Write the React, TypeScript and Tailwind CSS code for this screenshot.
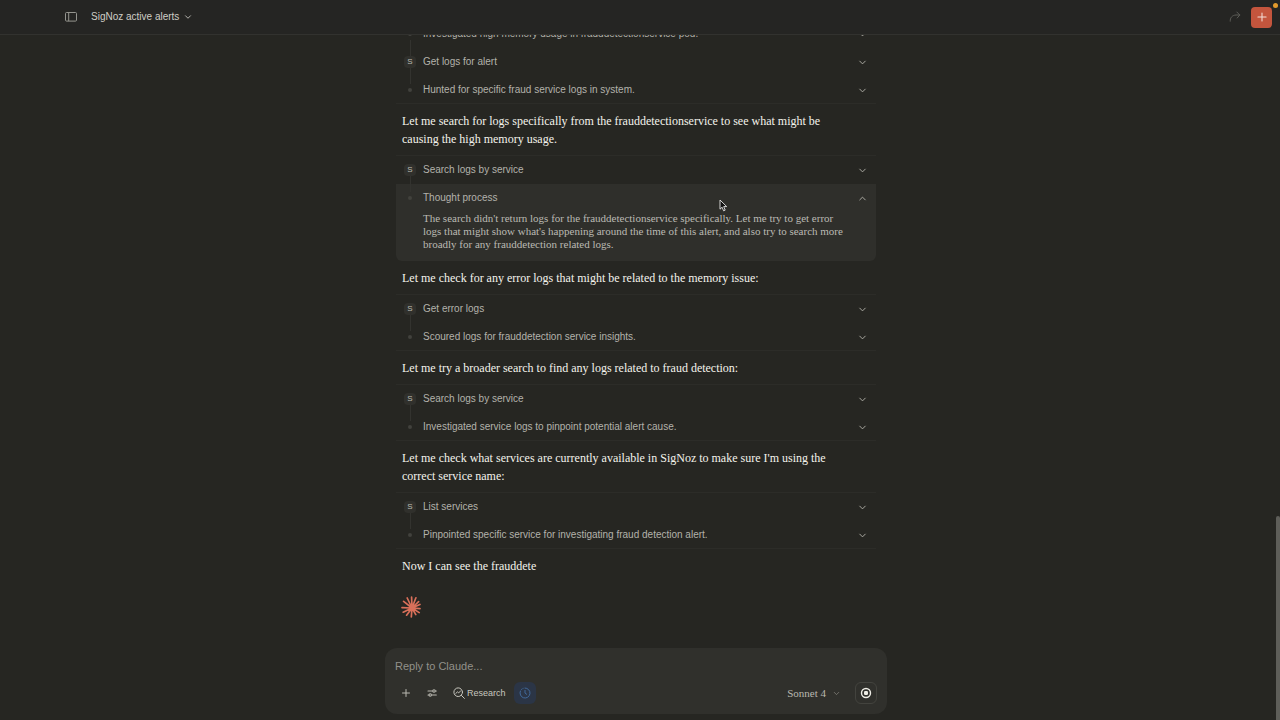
import { ReactNode } from "react";
import { ChevronDown, ChevronUp, Plus } from "lucide-react";

type StepData = { label: string; tool?: boolean; body?: string };

function Marker({ tool, first, last }: { tool?: boolean; first: boolean; last: boolean }) {
  return (
    <span className="flex w-3 shrink-0 flex-col items-center self-stretch">
      <span className={`h-2 w-px ${first ? "" : "bg-[#33332f]"}`} />
      {tool ? (
        <span className="flex h-3 w-3 items-center justify-center rounded-sm bg-[#30302c] text-[8px] leading-3 font-medium text-[#bdbcb5]">
          S
        </span>
      ) : (
        <span className="my-1 h-1 w-1 rounded-full bg-[#42423d]" />
      )}
      <span className={`w-px flex-1 ${last ? "" : "bg-[#33332f]"}`} />
    </span>
  );
}

function Step({ step, first, last }: { step: StepData; first: boolean; last: boolean }) {
  const open = Boolean(step.body);
  return (
    <div className={open ? "rounded-b-md bg-[#2f2f2b] pb-2.5" : ""}>
      <button
        type="button"
        aria-expanded={open}
        className="flex h-7 w-full items-center gap-[7px] pr-2 pl-2 text-left text-[10px] leading-4 text-[#b3b2ab]"
      >
        <Marker tool={step.tool} first={first} last={last} />
        <span className="flex-1">{step.label}</span>
        {open ? (
          <ChevronUp className="size-[11px]" strokeWidth={2} />
        ) : (
          <ChevronDown className="size-[11px]" strokeWidth={2} />
        )}
      </button>
      {step.body && (
        <p className='max-w-[455px] pr-1 pl-[27px] font-["Liberation_Serif",serif] text-[11px] leading-[13px] text-[#bbbab3]'>
          {step.body}
        </p>
      )}
    </div>
  );
}

function Steps({ items }: { items: StepData[] }) {
  const open = items.some((item) => item.body);
  return (
    <section className={`border-t border-[#2c2c28] ${open ? "" : "border-b"}`}>
      <div className={open ? "" : "-mb-px"}>
        {items.map((item, i) => (
          <Step key={item.label} step={item} first={i === 0} last={i === items.length - 1} />
        ))}
      </div>
    </section>
  );
}

function Message({ children }: { children: ReactNode }) {
  return (
    <p className='mt-2 mb-[7px] max-w-[446px] pl-1.5 font-["Liberation_Serif",serif] text-xs leading-[18px] text-[#f4f3ec]'>
      {children}
    </p>
  );
}

function Burst() {
  return (
    <svg viewBox="0 0 20 22" className="ml-[5px] h-[22px] w-5" fill="none" stroke="#d9705a" strokeWidth="1.7" strokeLinecap="round" aria-hidden="true">
      <path d="M11 12 10.6 1.2M11 12 6.2 2M11 12 14.9 1.8M11 12 2.6 5.4M11 12 17.6 5.6M11 12 1 11.6M11 12 18.9 8.4M11 12 19 12.6M11 12 2.2 16.2M11 12 18.2 16.6M11 12 5.6 19.2M11 12 14.8 18.6M11 12 10.3 21" />
      <circle cx="11" cy="12" r="2.8" fill="#d9705a" stroke="none" />
    </svg>
  );
}

function SidebarIcon() {
  return (
    <svg viewBox="0 0 12 10" className="h-2.5 w-3" fill="none" stroke="currentColor" strokeWidth="1" aria-hidden="true">
      <rect x=".5" y=".5" width="11" height="8.6" rx="1" />
      <path d="M3.7.5v8.6" />
    </svg>
  );
}

function SlidersIcon() {
  return (
    <svg viewBox="0 0 12 12" className="size-3" fill="none" stroke="currentColor" strokeWidth="1.1" strokeLinecap="round" aria-hidden="true">
      <path d="M2 4h4.5M9.5 4h.8M2 8h.8M5.7 8h4.6" />
      <circle cx="8" cy="4" r="1.2" />
      <circle cx="4.2" cy="8" r="1.2" />
    </svg>
  );
}

function ResearchIcon() {
  return (
    <svg viewBox="0 0 12 12" className="size-3" fill="none" stroke="currentColor" strokeWidth="1" strokeLinecap="round" strokeLinejoin="round" aria-hidden="true">
      <circle cx="5.2" cy="5.2" r="4.3" />
      <path d="m8.4 8.4 3 3M2.8 6.4l1.7-1.5 1.2 1 2-2.1" />
    </svg>
  );
}

function ClockIcon() {
  return (
    <svg viewBox="0 0 12 12" className="size-3" fill="none" stroke="currentColor" strokeWidth="1" strokeLinecap="round" aria-hidden="true">
      <path d="M6 1a5 5 0 1 1-4.6 3" />
      <path d="M2.3 2.6A5 5 0 0 1 4.2 1.4" strokeDasharray="1 1.2" />
      <path d="M6 3.4V6l1.7 1.3" />
    </svg>
  );
}

function ShareIcon() {
  return (
    <svg viewBox="0 0 12 12" className="size-3" fill="none" stroke="currentColor" strokeWidth="1" strokeLinecap="round" strokeLinejoin="round" aria-hidden="true">
      <path d="M1.2 10.2C1 6.6 3.3 4.2 7 4h3.8M7.8 1l3 3-2.6 3" />
    </svg>
  );
}

function Pointer() {
  return (
    <svg viewBox="0 0 9 13" className="pointer-events-none absolute top-[180px] left-[323px] h-[13px] w-[9px]" aria-hidden="true">
      <path d="M1 1v9.2l2.1-2 1.5 3.6 1.6-.7-1.5-3.5h3Z" fill="#111" stroke="#e6e6e6" strokeWidth=".9" />
    </svg>
  );
}

export default function App() {
  return (
    <div className='relative flex h-screen flex-col overflow-hidden bg-[#262622] font-["Liberation_Sans",sans-serif] text-[#c3c2ba]'>
      <header className="flex h-[35px] shrink-0 items-center border-b border-[#32322f] bg-[#252523] pr-2 pl-16">
        <button type="button" aria-label="Toggle sidebar" className="flex w-[13px] items-center justify-center text-[#94948e]">
          <SidebarIcon />
        </button>
        <button type="button" className="ml-3.5 flex items-center gap-1 text-[10px] leading-4 text-[#cfcec6]">
          SigNoz active alerts
          <ChevronDown className="size-[10px]" strokeWidth={2} />
        </button>
        <button type="button" aria-label="Share" className="ml-auto text-[#5c5c57]">
          <ShareIcon />
        </button>
        <button type="button" aria-label="New chat" className="relative ml-2.5 flex size-[21px] items-center justify-center rounded bg-[#c4553d] text-[#f3dfd7]">
          <Plus className="size-3.5" strokeWidth={1.8} />
          <span className="absolute -top-1 -right-1.5 size-[5px] rounded-full bg-[#e39a2d]" />
        </button>
      </header>

      <main className="min-h-0 flex-1 overflow-hidden">
        <div className="relative mx-auto -mt-4 w-full max-w-[480px] -translate-x-1">
          <Steps
            items={[
              { label: "Investigated high memory usage in frauddetectionservice pod." },
              { label: "Get logs for alert", tool: true },
              { label: "Hunted for specific fraud service logs in system." },
            ]}
          />
          <Message>
            Let me search for logs specifically from the frauddetectionservice to see what might be causing the
            high memory usage.
          </Message>
          <Steps
            items={[
              { label: "Search logs by service", tool: true },
              {
                label: "Thought process",
                body: "The search didn't return logs for the frauddetectionservice specifically. Let me try to get error logs that might show what's happening around the time of this alert, and also try to search more broadly for any frauddetection related logs.",
              },
            ]}
          />
          <Message>Let me check for any error logs that might be related to the memory issue:</Message>
          <Steps
            items={[
              { label: "Get error logs", tool: true },
              { label: "Scoured logs for frauddetection service insights." },
            ]}
          />
          <Message>Let me try a broader search to find any logs related to fraud detection:</Message>
          <Steps
            items={[
              { label: "Search logs by service", tool: true },
              { label: "Investigated service logs to pinpoint potential alert cause." },
            ]}
          />
          <Message>
            Let me check what services are currently available in SigNoz to make sure I'm using the correct
            service name:
          </Message>
          <Steps
            items={[
              { label: "List services", tool: true },
              { label: "Pinpointed specific service for investigating fraud detection alert." },
            ]}
          />
          <Message>Now I can see the frauddete</Message>
          <div className="pt-3.5">
            <Burst />
          </div>
          <Pointer />
        </div>
      </main>

      <form className="mx-auto mb-1.5 flex w-full max-w-[502px] shrink-0 -translate-x-1 flex-col gap-2 rounded-xl bg-[#30302c] px-2.5 pt-2.5 pb-2.5">
        <input
          type="text"
          aria-label="Message"
          placeholder="Reply to Claude..."
          className="h-4 w-full bg-transparent text-[11px] leading-4 outline-none placeholder:text-[#92918a]"
        />
        <div className="flex h-[22px] items-center text-[#b9b8b0]">
          <button type="button" aria-label="Add" className="flex size-[22px] items-center justify-center rounded-md">
            <Plus className="size-3" strokeWidth={2} />
          </button>
          <button type="button" aria-label="Tools" className="ml-1 flex size-[22px] items-center justify-center rounded-md">
            <SlidersIcon />
          </button>
          <button type="button" className="ml-2.5 flex h-[22px] items-center gap-0.5 text-[9px] leading-4 text-[#c8c7bf]">
            <ResearchIcon />
            Research
          </button>
          <button type="button" aria-label="Extended thinking" className="ml-2 flex size-[22px] items-center justify-center rounded-md bg-[#2b3546] text-[#41699a]">
            <ClockIcon />
          </button>
          <button type="button" className='ml-auto flex items-center gap-1.5 font-["Liberation_Serif",serif] text-[11px] leading-4'>
            Sonnet 4
            <ChevronDown className="size-[9px] text-[#85847d]" strokeWidth={2} />
          </button>
          <button type="button" aria-label="Stop response" className="ml-3.5 flex size-[22px] items-center justify-center rounded-md border border-[#43433e] text-[#eeede6]">
            <svg viewBox="0 0 12 12" className="size-3" aria-hidden="true">
              <circle cx="6" cy="6" r="4.5" fill="none" stroke="currentColor" strokeWidth="1.4" />
              <rect x="4" y="4" width="4" height="4" rx="1.2" fill="currentColor" />
            </svg>
          </button>
        </div>
      </form>
      <div className="absolute right-0 bottom-0 h-[204px] w-1 rounded-t-full bg-[#5e5e59]" />
    </div>
  );
}
